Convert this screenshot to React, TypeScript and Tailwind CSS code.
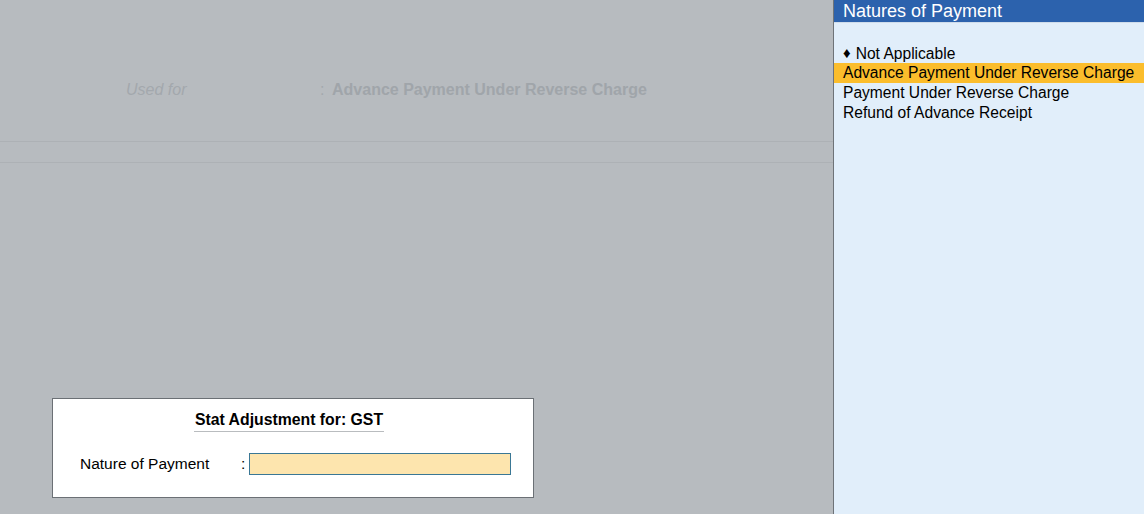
import React from 'react'

const natures = [
  { label: 'Not Applicable', mark: true },
  { label: 'Advance Payment Under Reverse Charge', active: true },
  { label: 'Payment Under Reverse Charge' },
  { label: 'Refund of Advance Receipt' },
]

const App = () => {
  return (
    <div
      className="w-[1144px] h-[514px] flex overflow-hidden text-black"
      style={{ fontFamily: '"Liberation Sans", Arial, sans-serif' }}
    >
      {/* dimmed voucher screen behind the popup */}
      <div className="w-[833px] h-full bg-[#b7bbbf] flex flex-col">
        <div className="h-[142px] flex items-center pt-[38px] border-b border-[#adb1b5]">
          <span className="w-[194px] pl-[126px] italic text-[16px] text-[#a3a8ad]">Used for</span>
          <span className="pl-[126px] w-[12px] text-[16px] text-[#a3a8ad]">:</span>
          <span className="pl-[12px] font-bold text-[16px] text-[#a0a5aa] whitespace-nowrap">
            Advance Payment Under Reverse Charge
          </span>
        </div>
        <div className="h-[21px] border-b border-[#adb1b5]" />
        <div className="flex-1 flex items-end pl-[52px] pb-[16px]">
          <div className="w-[482px] h-[100px] bg-white border border-[#6b7075] flex flex-col items-center">
            <div className="mt-[12px] mr-[8px] px-[1px] pb-[2px] border-b border-[#b9bcbf] font-bold text-[15.8px] leading-[18px]">
              Stat Adjustment for: GST
            </div>
            <div className="self-stretch flex items-center mt-[20px] pl-[27px] text-[15.5px]">
              <span className="w-[162px]">Nature of Payment</span>
              <span className="w-[7px] -ml-[1px] mr-[1px]">:</span>
              <div className="w-[262px] h-[22px] bg-[#fde5ae] border border-[#3a7795]" />
            </div>
          </div>
        </div>
      </div>

      {/* list panel */}
      <div className="flex-1 h-full border-l border-[#6e7378] bg-[#e1eefa] flex flex-col">
        <div className="h-[23px] bg-[#2c62ad] text-white text-[18px] leading-[23px] pl-[9px] border-b border-[#cfdcea]">
          Natures of Payment
        </div>
        <div className="mt-[20px] flex flex-col">
          {natures.map((n) => (
            <div
              key={n.label}
              className={`h-[20px] leading-[19px] pl-[9px] text-[15.6px] whitespace-nowrap ${
                n.active ? 'bg-[#fbbd2c]' : ''
              }`}
            >
              {n.mark && <span className="text-[15px] mr-[5px] align-[1px]">♦</span>}
              {n.label}
            </div>
          ))}
        </div>
      </div>
    </div>
  )
}

export default App
